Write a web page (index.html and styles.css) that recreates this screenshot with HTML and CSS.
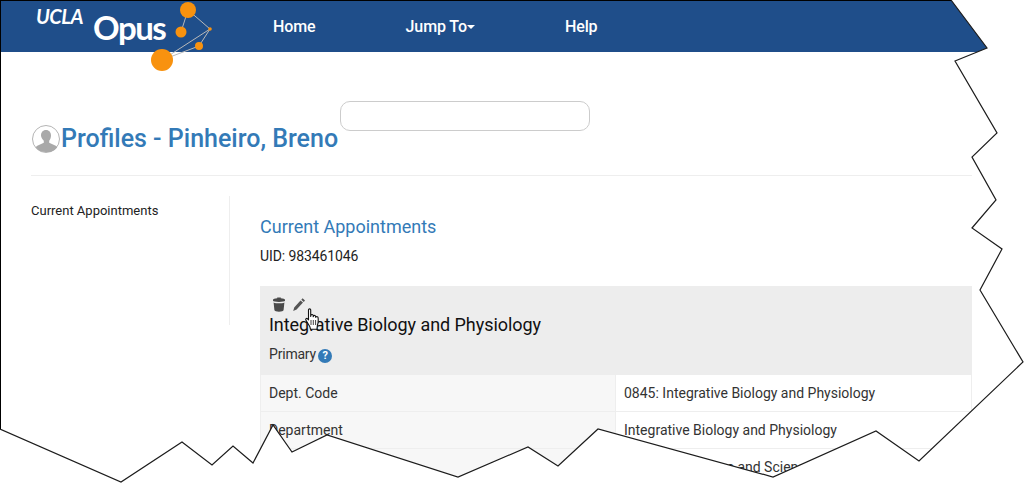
FILE: index.html
```html
<!DOCTYPE html>
<html lang="en">

<head>
    <meta charset="UTF-8">
    <meta name="viewport" content="width=device-width,initial-scale=1.0">
    <title>Profiles - Pinheiro, Breno</title>
    <link rel="stylesheet" href="styles.css">
</head>

<body>
    <!-- Top nav -->
    <nav class="navbar">
        <div class="brand">
            <svg class="brand-logo" width="230" height="76" viewBox="0 0 230 76">
                <g stroke="#b9b9b9" stroke-width="1" fill="none">
                    <path d="M188 10 210 29 162 60 199 46 210 29"/>
                    <path d="M188 10 181 32"/>
                </g>
                <g fill="#f8920f">
                    <circle cx="188" cy="10" r="8"/>
                    <circle cx="181" cy="32" r="5.500"/>
                    <circle cx="210" cy="29" r="1.800"/>
                    <circle cx="199" cy="46" r="4"/>
                    <circle cx="162" cy="60" r="11"/>
                </g>
                <text class="logo-ucla" x="36" y="24">UCLA</text>
                <text class="logo-opus" x="93" y="40">Opus</text>
            </svg>
        </div>
        <ul class="nav-links">
            <li>Home</li>
            <li class="nav-drop">Jump To<span class="caret"></span></li>
            <li>Help</li>
        </ul>
    </nav>

    <div class="search-box"></div>

    <div class="page">
        <div class="page-title">
            <svg class="avatar" width="30" height="30" viewBox="0 0 30 30">
                <circle cx="15" cy="15" r="13.500" fill="#fff" stroke="#b5b5b5" stroke-width="1"/>
                <path fill="#a9a9a9" d="M15 6c3.200 0 5 2.400 5 5.500 0 2.200-.8 4-1.800 5.200v2l6.500 3.100c.8.400 1.300 1 1.500 1.600A13 13 0 0 1 15 28a13 13 0 0 1-10.200-4.600c.2-.6.700-1.200 1.500-1.600l6.500-3.100v-2C11.800 15.500 10 13.700 10 11.500 10 8.400 11.800 6 15 6z"/>
            </svg>
            <h1>Profiles - Pinheiro, Breno</h1>
        </div>

        <div class="columns">
            <div class="side-menu">Current Appointments</div>

            <div class="main-col">
                <h2>Current Appointments</h2>
                <p class="uid">UID: 983461046</p>

                <div class="appt-panel">
                    <div class="appt-head">
                        <div class="appt-icons">
                            <svg width="14" height="15" viewBox="0 0 14 15">
                                <path fill="#4a4a4a" d="M5.200 1.200V.5h3.600v.7c2.300.2 4.200.8 4.200 1.600v.9c0 .6-2.700 1.200-6 1.200S1 4.300 1 3.700v-.9c0-.8 1.900-1.400 4.200-1.600z"/>
                                <path fill="#4a4a4a" d="M1.600 5.400C3 6 5 6.300 7 6.300s4-.3 5.400-.9L11.600 13c-.1 1-2.200 1.700-4.600 1.700S2.500 14 2.400 13z"/>
                            </svg>
                            <svg width="14" height="15" viewBox="0 0 14 15">
                                <path fill="#555" d="M10.600 1.300l2.400 2.200-1.200 1.400-2.500-2.200zM8.500 3.400l2.500 2.200-6.400 7L1.200 14l1-3.500z"/>
                            </svg>
                        </div>
                        <h3>Integrative Biology and Physiology</h3>
                        <div class="primary">Primary <span class="help-dot">?</span></div>
                    </div>
                    <div class="appt-row">
                        <div class="cell-label">Dept. Code</div>
                        <div class="cell-value">0845: Integrative Biology and Physiology</div>
                    </div>
                    <div class="appt-row">
                        <div class="cell-label">Department</div>
                        <div class="cell-value">Integrative Biology and Physiology</div>
                    </div>
                    <div class="appt-row">
                        <div class="cell-label">School/Division</div>
                        <div class="cell-value">College of Letters and Sciences</div>
                    </div>
                </div>
            </div>
        </div>
    </div>

    <!-- Mouse pointer over the panel -->
    <svg class="hand-cursor" width="17" height="24" viewBox="0 0 17 24">
        <path fill="#fff" stroke="#111" stroke-width="1.100" stroke-linejoin="round" d="M3.500 1.800c0-1.300 2.200-1.300 2.200 0v6.700l.3-1.300c.3-1 2.100-.9 2.200.3v1.200l.4-.8c.4-.8 2-.6 2 .4v1l.5-.4c.7-.5 1.900-.2 2 .8.300 3 .2 5.300-.7 7.600l-.5 4H5.500l-.6-2.500L1 12.300c-.8-1.400.7-2.500 1.600-1.500l.9 1z"/>
        <path stroke="#111" stroke-width=".8" d="M6 12v5M8.300 12v5M10.600 12v5"/>
    </svg>

    <!-- Torn paper edge of the screenshot -->
    <svg class="torn-edge" width="1024" height="483" viewBox="0 0 1024 483">
        <path fill="#fff" d="M951 0 987 48 955 61 997 133 972 157 996 200 972 228 1002 249 980 290 1023 362 919 461 876 431 773 477 598 429 558 466 528 447 458 477 327 435 292 452 273 425 253 463 233 446 212 465 182 442 121 482 0 429V483H1024V0z"/>
        <path fill="none" stroke="#1c1c1c" stroke-width="1.200" d="M0 429 121 482 182 442 212 465 233 446 253 463 273 425 292 452 327 435 458 477 528 447 558 466 598 429 773 477 876 431 919 461 1023 362 980 290 1002 249 972 228 996 200 972 157 997 133 955 61 987 48 951 0"/>
        <path fill="none" stroke="#000" stroke-width="2" d="M0 429V0H951"/>
    </svg>
</body>

</html>
```

FILE: styles.css
```css
* {
    margin: 0;
    padding: 0;
    box-sizing: border-box;
}

html,
body {
    height: 100%;
    overflow: hidden;
    background-color: #fff;
    font-family: "Roboto", "Lato", sans-serif;
    color: #222;
}

/* Top nav */
.navbar {
    display: flex;
    align-items: center;
    height: 52px;
    background-color: #1f4e8a;
}

.brand {
    position: relative;
    width: 273px;
    height: 52px;
}

.brand-logo {
    position: absolute;
    left: 0;
    top: 0;
    overflow: visible;
}

.logo-ucla {
    font-family: "Lato", sans-serif;
    font-size: 20px;
    font-style: italic;
    font-weight: 700;
    letter-spacing: -.5px;
    fill: #fff;
}

.logo-opus {
    font-family: "Lato", sans-serif;
    font-size: 33px;
    font-weight: 700;
    letter-spacing: -1.500px;
    fill: #fff;
}

.nav-links {
    display: flex;
    list-style: none;
    color: #fff;
    font-size: 16px;
    font-weight: 500;
    letter-spacing: -.1px;
}

.nav-links li {
    margin-right: 90px;
}

.caret {
    display: inline-block;
    vertical-align: middle;
    border-top: 4px solid #fff;
    border-left: 4px solid transparent;
    border-right: 4px solid transparent;
}

/* Floating search box */
.search-box {
    position: absolute;
    left: 340px;
    top: 101px;
    width: 250px;
    height: 30px;
    background-color: #fff;
    border: 1px solid #ccc;
    border-radius: 10px;
}

.page {
    padding: 0 52px 0 31px;
}

.page-title {
    display: flex;
    align-items: center;
    height: 124px;
    padding-top: 50px;
    border-bottom: 1px solid #eee;
}

.page-title h1 {
    font-size: 25px;
    font-weight: 500;
    color: #337ab7;
}

.avatar {
    flex-shrink: 0;
}

.columns {
    display: flex;
    margin-top: 20px;
}

.side-menu {
    flex-shrink: 0;
    width: 199px;
    height: 129px;
    padding-top: 7px;
    border-right: 1px solid #eee;
    font-size: 13px;
}

.main-col {
    flex: 1;
    padding-left: 30px;
}

.main-col h2 {
    margin-top: 20px;
    font-size: 18px;
    font-weight: 400;
    color: #337ab7;
}

.uid {
    margin-top: 11px;
    font-size: 14px;
    letter-spacing: -.1px;
}

/* Appointment card */
.appt-panel {
    margin-top: 22px;
}

.appt-head {
    height: 89px;
    padding: 11px 9px 0;
    background-color: #ededed;
}

.appt-icons {
    display: flex;
    gap: 6px;
    height: 17px;
    padding-left: 3px;
}

.appt-head h3 {
    font-size: 18px;
    font-weight: 400;
    letter-spacing: -.05px;
    color: #111;
}

.primary {
    margin-top: 11px;
    font-size: 14px;
    letter-spacing: -.2px;
    color: #333;
}

.help-dot {
    display: inline-block;
    width: 14px;
    height: 14px;
    margin-left: -1px;
    border-radius: 50%;
    background-color: #337ab7;
    color: #fff;
    font-size: 11px;
    font-weight: 700;
    line-height: 14px;
    text-align: center;
}

.appt-row {
    display: flex;
    height: 37px;
    font-size: 14px;
    line-height: 37px;
    color: #333;
    border-bottom: 1px solid #eee;
    border-right: 1px solid #eee;
}

.cell-label {
    width: 356px;
    padding-left: 8px;
    background-color: #f7f7f7;
    border-left: 1px solid #eee;
    border-right: 1px solid #eee;
}

.cell-value {
    flex: 1;
    padding-left: 8px;
}

/* Things lying over the page */
.hand-cursor {
    position: absolute;
    left: 305px;
    top: 308px;
}

.torn-edge {
    position: absolute;
    left: 0;
    top: 0;
}
```
